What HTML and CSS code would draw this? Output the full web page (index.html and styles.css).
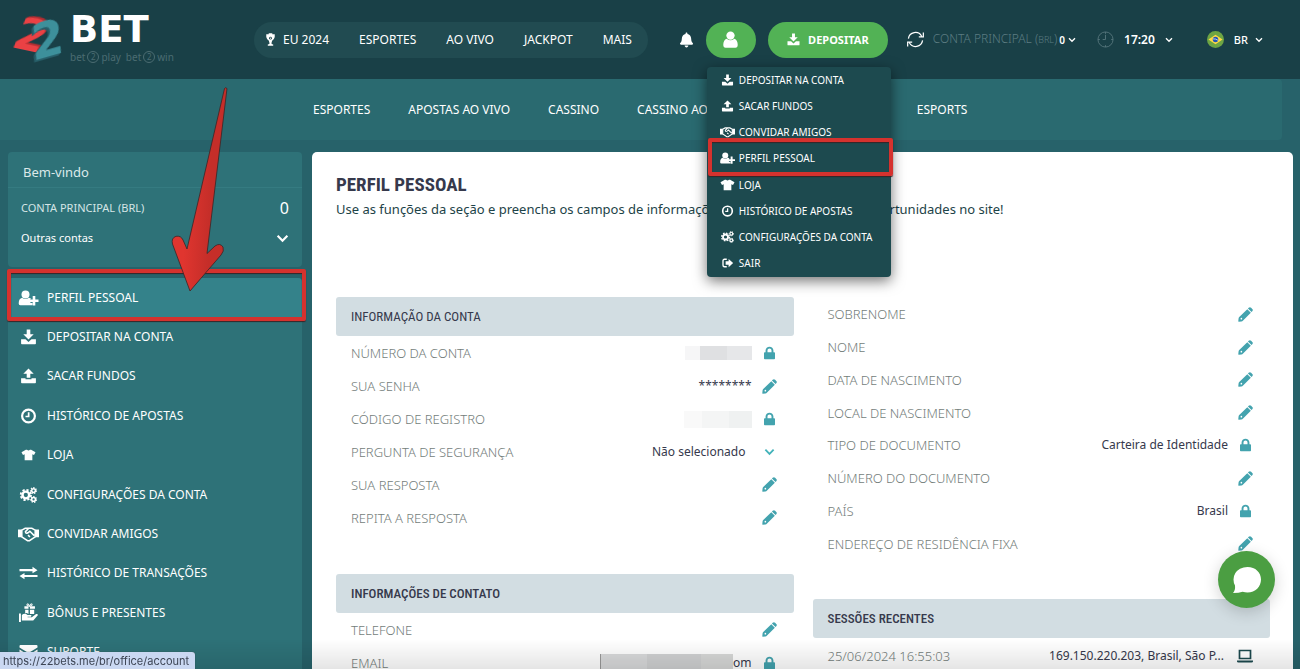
FILE: index.html
```html
<!DOCTYPE html>
<html lang="pt-BR">
<head>
<meta charset="utf-8">
<title>22BET - Perfil pessoal</title>
<link rel="stylesheet" href="styles.css">
</head>
<body>
<svg class="sprite" aria-hidden="true">
  <symbol id="download" viewBox="0 0 16 16"><path d="M6.200.6h3.600v4.600h3.400L8 10.400 2.800 5.200h3.400z"/><path d="M.6 10.200h4.400L8 13l3-2.800h4.400v4.200q0 .8-.8.8H1.400q-.8 0-.8-.8z"/></symbol>
  <symbol id="upload" viewBox="0 0 16 16"><path d="M6.200 9.800V5.800H2.800L8 .6l5.200 5.200H9.800v4z"/><path d="M.6 10.200h4.400v1h6v-1h4.400v4.200q0 .8-.8.8H1.400q-.8 0-.8-.8z"/></symbol>
  <symbol id="user" viewBox="0 0 16 16"><circle cx="8" cy="4.300" r="3.900"/><path d="M4.400 7.200Q8 10.300 11.600 7.200 14.800 8.300 14.800 13 14.800 15.800 12.600 15.800H3.400Q1.200 15.800 1.200 13 1.200 8.300 4.400 7.200z"/></symbol>
  <symbol id="userplus" viewBox="0 0 20 16"><circle cx="7" cy="4.500" r="4"/><path d="M3.600 7.700q3.400 2.500 6.800 0 1.600.3 2.400 1.300h-.9v4h2.200v2q-.3.300-1 .3H1.800Q.2 15.300.2 13.500q0-5 3.400-5.800z"/><path d="M14.200 6h2.600v3.500H20v2.500h-3.200v3.500h-2.600V12H11V9.500h3.200z"/></symbol>
  <symbol id="clock" viewBox="0 0 16 16"><circle cx="8" cy="8" r="6.400" fill="none" stroke="currentColor" stroke-width="2.200"/><path d="M7.300 4.200h1.700v5H5V7.700h2.300z"/></symbol>
  <symbol id="shirt" viewBox="0 0 16 16"><path d="M5 2h1.300q1.700 1.800 3.400 0H11l5 2.800-1.700 3.200-1.900-.9V14H3.600V7.100L1.700 8 0 4.800z"/></symbol>
  <symbol id="gears" viewBox="0 0 20 18"><g fill="none" stroke="currentColor"><circle cx="7" cy="9" r="3.800" stroke-width="2.800"/><circle cx="7" cy="9" r="5.800" stroke-width="2" stroke-dasharray="2.500 2.055"/><circle cx="15.700" cy="4" r="2.100" stroke-width="1.700"/><circle cx="15.700" cy="4" r="3.300" stroke-width="1.300" stroke-dasharray="1.500 1.460"/><circle cx="15.700" cy="14" r="2.100" stroke-width="1.700"/><circle cx="15.700" cy="14" r="3.300" stroke-width="1.300" stroke-dasharray="1.500 1.460"/></g></symbol>
  <symbol id="hands" viewBox="0 0 22 16"><path d="M0 3.200h4v8.300H0zM18 3.200h4v8.300h-4z"/><path d="M4 4l3.500-2h7L18 4v7l-6 4h-2l-6-4zM11 2.200L7.800 5.500q0 2.500 2.600 1.200l2-1.500 4.600 4.500M10.500 9.200l2 2" fill="none" stroke="currentColor" stroke-width="1.600"/></symbol>
  <symbol id="exchange" viewBox="0 0 18 14"><path d="M0 3h13V.8L18 4.200 13 7.300V5.200H0zM18 9H5V6.900L0 10l5 3.300v-2.200h13z"/></symbol>
  <symbol id="gift" viewBox="0 0 20 20"><path d="M0 11h2v9H0zM3 12.500q3-2.200 6 0h3.500q1.500.8 0 2H9v.6h4.500L18 11.500q1.700-.3 2 1.200L15 18.500H3zM6.500 7H10v4.500Q7.500 9.700 6.500 11zM11.500 7H16v4.500h-4.500zM5.700 3.500H10V6H5.700zM11.500 3.500h5.300V6h-5.300z"/><path d="M11 3.500Q7 3 8.500 1 10-.2 11 3.500 12.200-.2 13.800 1 15 3 11 3.500" fill="none" stroke="currentColor"/></symbol>
  <symbol id="mail" viewBox="0 0 18 14"><path d="M1 0h16q1 0 1 1v1.500L9 8 0 2.500V1q0-1 1-1zM0 4.500L9 10l9-5.500V13q0 1-1 1H1q-1 0-1-1z"/></symbol>
  <symbol id="exit" viewBox="0 0 16 16"><path d="M7 3H4Q2 3 2 5v6q0 2 2 2h3" fill="none" stroke="currentColor" stroke-width="1.800"/><path d="M5.500 5.800h4V2.500L15.500 8l-6 5.500v-3.300h-4z"/></symbol>
  <symbol id="bell" viewBox="0 0 448 512"><path d="M224 512c35.320 0 63.970-28.650 63.970-64H160.030c0 35.350 28.650 64 63.970 64zm215.390-149.710c-19.320-20.760-55.470-51.990-55.470-154.290 0-77.700-54.480-139.900-127.940-155.160V32c0-17.670-14.320-32-31.980-32s-31.980 14.330-31.980 32v20.840C118.560 68.100 64.080 130.300 64.080 208c0 102.300-36.150 133.530-55.470 154.290-6 6.450-8.660 14.160-8.610 21.710.11 16.400 12.980 32 32.100 32h383.800c19.120 0 32-15.600 32.100-32 .05-7.550-2.610-15.270-8.610-21.710z"/></symbol>
  <symbol id="lock" viewBox="0 0 448 512"><path d="M416 224h-32v-72C384 68.200 307.800 0 224 0S64 68.200 64 152v72H32c-18 0-32 14-32 32v224c0 18 14 32 32 32h384c18 0 32-14 32-32V256c0-18-14-32-32-32zm-110 0H142v-72c0-44 38-78 82-78s82 34 82 78v72z"/></symbol>
  <symbol id="pencil" viewBox="0 0 16 16"><path d="M10.600 1.600l.8-.8q1.300-1.300 2.600 0l1.200 1.200q1.300 1.300 0 2.600l-.8.800zM9.900 2.300l3.800 3.800-8.300 8.300q-.8.900-1.800 1l-2.800.3q-.6 0-.5-.6l.3-2.800q.1-1 1-1.800z"/><circle cx="3.600" cy="12.400" r=".9" fill="#fff"/></symbol>
  <symbol id="chevron" viewBox="0 0 12 8"><path d="M1.500 1.500L6 6l4.500-4.500" fill="none" stroke="currentColor" stroke-width="2"/></symbol>
  <symbol id="reload" viewBox="0 0 18 18"><g fill="none" stroke="currentColor" stroke-width="1.300"><path d="M1.500 8A7.500 7.500 0 0 1 15.500 5.500M17.300 1.500v4.800h-4.800M16.500 10A7.500 7.500 0 0 1 2.500 12.500M.7 16.500v-4.800h4.800"/></g></symbol>
  <symbol id="cup" viewBox="0 0 10 14"><path d="M3 0h4v1.200h2.700v3Q9 7.500 6.800 8.500L6.200 10.500V12l1.800.6V14H2v-1.400l1.800-.6v-1.500l-.6-2Q1 7.500.3 4.200v-3H3z"/><circle cx="5" cy="5.500" r="1.500" fill="#194047"/><circle cx="5" cy="5.500" r=".7"/></symbol>
  <symbol id="laptop" viewBox="0 0 16 14"><path d="M2.500 1.500h11v8h-11z" fill="none" stroke="currentColor" stroke-width="1.700"/><path d="M0 11.500h16v1q0 1-1.500 1h-13Q0 13.500 0 12.500z"/></symbol>
</svg>

<div class="page">
  <header class="topbar">
    <a class="logo" href="#" aria-label="22BET">
      <svg class="mark" viewBox="0 0 50 48">
        <text class="two red" x="1" y="34" transform="rotate(12 12 24)">2</text>
        <text class="two teal" x="18" y="40" transform="rotate(-16 34 27)">2</text>
      </svg>
      <span class="brand"><b>BET</b><small>bet<i>2</i>play&ensp;bet<i>2</i>win</small></span>
    </a>
    <nav class="pill" aria-label="Principal">
      <a href="#"><svg class="i-cup"><use href="#cup"/></svg>EU 2024</a><a href="#">ESPORTES</a><a href="#">AO VIVO</a><a href="#">JACKPOT</a><a href="#">MAIS</a>
    </nav>
    <button class="bell" aria-label="Notificações"><svg><use href="#bell"/></svg></button>
    <div class="account">
      <button class="green user" aria-label="Conta"><svg><use href="#user"/></svg></button>
      <ul class="dropdown">
        <li><a href="#"><svg><use href="#download"/></svg>DEPOSITAR NA CONTA</a></li>
        <li><a href="#"><svg><use href="#upload"/></svg>SACAR FUNDOS</a></li>
        <li><a href="#"><svg><use href="#hands"/></svg>CONVIDAR AMIGOS</a></li>
        <li class="marked"><a href="#"><svg><use href="#userplus"/></svg>PERFIL PESSOAL</a></li>
        <li><a href="#"><svg class="large"><use href="#shirt"/></svg>LOJA</a></li>
        <li><a href="#"><svg><use href="#clock"/></svg>HISTÓRICO DE APOSTAS</a></li>
        <li><a href="#"><svg><use href="#gears"/></svg>CONFIGURAÇÕES DA CONTA</a></li>
        <li><a href="#"><svg><use href="#exit"/></svg>SAIR</a></li>
      </ul>
    </div>
    <button class="green deposit"><svg><use href="#download"/></svg>DEPOSITAR</button>
    <button class="balance"><svg class="i-reload"><use href="#reload"/></svg><span>CONTA PRINCIPAL (<small>BRL</small>)</span><b>0</b><svg class="i-chev"><use href="#chevron"/></svg></button>
    <button class="time"><svg class="i-clock" viewBox="0 0 18 18"><circle cx="9" cy="9" r="8"/><path d="M9 4v5H6M9 1v2M9 15v2M1 9h2M15 9h2"/></svg>17:20<svg class="i-chev"><use href="#chevron"/></svg></button>
    <button class="lang"><svg class="i-flag" viewBox="0 0 18 18"><circle cx="9" cy="9" r="9" fill="#6da544"/><path d="M9 4L16.500 9 9 14 1.500 9z" fill="#ffda44"/><circle cx="9" cy="9" r="2.900" fill="#2257b5"/><path d="M6.300 8.400q3-.4 5.300 1.400" stroke="#eee" stroke-width=".8" fill="none"/></svg>BR<svg class="i-chev"><use href="#chevron"/></svg></button>
  </header>

  <nav class="subnav" aria-label="Seções">
    <a href="#">ESPORTES</a><a href="#">APOSTAS AO VIVO</a><a href="#">CASSINO</a><a href="#">CASSINO AO VIVO</a><a class="far" href="#">ESPORTS</a>
  </nav>

  <div class="columns">
    <aside class="side">
      <section class="wallet">
        <p class="hello">Bem-vindo</p>
        <div class="main-acc"><span>CONTA PRINCIPAL (BRL)</span><b>0</b></div>
        <button class="others">Outras contas<svg><use href="#chevron"/></svg></button>
      </section>
      <ul class="menu">
        <li class="marked"><a href="#"><svg><use href="#userplus"/></svg>PERFIL PESSOAL</a></li>
        <li><a href="#"><svg><use href="#download"/></svg>DEPOSITAR NA CONTA</a></li>
        <li><a href="#"><svg><use href="#upload"/></svg>SACAR FUNDOS</a></li>
        <li><a href="#"><svg><use href="#clock"/></svg>HISTÓRICO DE APOSTAS</a></li>
        <li><a href="#"><svg class="small"><use href="#shirt"/></svg>LOJA</a></li>
        <li><a href="#"><svg><use href="#gears"/></svg>CONFIGURAÇÕES DA CONTA</a></li>
        <li><a href="#"><svg><use href="#hands"/></svg>CONVIDAR AMIGOS</a></li>
        <li><a href="#"><svg class="small"><use href="#exchange"/></svg>HISTÓRICO DE TRANSAÇÕES</a></li>
        <li><a href="#"><svg class="big"><use href="#gift"/></svg>BÔNUS E PRESENTES</a></li>
        <li><a href="#"><svg class="small"><use href="#mail"/></svg>SUPORTE</a></li>
      </ul>
    </aside>

    <main class="content">
      <h1>PERFIL PESSOAL</h1>
      <p class="lead">Use as funções da seção e preencha os campos de informações para ter acesso a mais oportunidades no site!</p>
      <div class="cols">
        <div class="col">
          <h2 class="regular">INFORMAÇÃO DA CONTA</h2>
          <div class="fields six">
            <div class="field"><span>NÚMERO DA CONTA</span><em class="mask m1"></em><svg class="lk"><use href="#lock"/></svg></div>
            <div class="field"><span>SUA SENHA</span><em>********</em><button aria-label="Editar senha"><svg><use href="#pencil"/></svg></button></div>
            <div class="field"><span>CÓDIGO DE REGISTRO</span><em class="mask m2"></em><svg class="lk"><use href="#lock"/></svg></div>
            <div class="field"><label for="q">PERGUNTA DE SEGURANÇA</label><select id="q"><option>Não selecionado</option></select><svg class="ch"><use href="#chevron"/></svg></div>
            <div class="field"><span>SUA RESPOSTA</span><button aria-label="Editar resposta"><svg><use href="#pencil"/></svg></button></div>
            <div class="field"><span>REPITA A RESPOSTA</span><button aria-label="Editar repetição"><svg><use href="#pencil"/></svg></button></div>
          </div>
          <h2>INFORMAÇÕES DE CONTATO</h2>
          <div class="fields two-rows">
            <div class="field"><span>TELEFONE</span><button aria-label="Editar telefone"><svg><use href="#pencil"/></svg></button></div>
            <div class="field"><span>EMAIL</span><em><i class="mask m3"></i>om</em><svg class="lk"><use href="#lock"/></svg></div>
          </div>
        </div>
        <div class="col right">
          <div class="fields eight">
            <div class="field"><span>SOBRENOME</span><button aria-label="Editar sobrenome"><svg><use href="#pencil"/></svg></button></div>
            <div class="field"><span>NOME</span><button aria-label="Editar nome"><svg><use href="#pencil"/></svg></button></div>
            <div class="field"><span>DATA DE NASCIMENTO</span><button aria-label="Editar data"><svg><use href="#pencil"/></svg></button></div>
            <div class="field"><span>LOCAL DE NASCIMENTO</span><button aria-label="Editar local"><svg><use href="#pencil"/></svg></button></div>
            <div class="field"><span>TIPO DE DOCUMENTO</span><em>Carteira de Identidade</em><svg class="lk"><use href="#lock"/></svg></div>
            <div class="field"><span>NÚMERO DO DOCUMENTO</span><button aria-label="Editar número"><svg><use href="#pencil"/></svg></button></div>
            <div class="field"><span>PAÍS</span><em>Brasil</em><svg class="lk"><use href="#lock"/></svg></div>
            <div class="field"><span>ENDEREÇO DE RESIDÊNCIA FIXA</span><button aria-label="Editar endereço"><svg><use href="#pencil"/></svg></button></div>
          </div>
          <h2>SESSÕES RECENTES</h2>
          <div class="fields one">
            <div class="field session"><span>25/06/2024 16:55:03</span><em>169.150.220.203, Brasil, São P...</em><svg class="lap"><use href="#laptop"/></svg></div>
          </div>
        </div>
      </div>
    </main>
  </div>
</div>

<div class="fade"></div>
<svg class="arrow" viewBox="0 0 60 210" aria-hidden="true">
  <defs><linearGradient id="ag" x1="0" x2="1" y1="0" y2=".12"><stop offset=".3" stop-color="#e0352f"/><stop offset=".75" stop-color="#c52e29"/></linearGradient></defs>
  <path d="M54.500 4.500Q55.500 3 57 4.500L37 169.500 45 162Q50 158.500 53 163 54.500 167 51 171L20 207 2.500 160Q1 154 6 152.300 11 151.500 13 156L17 165z" fill="url(#ag)" stroke="#3a2426" stroke-width=".8"/>
</svg>
<button class="chat" aria-label="Chat"><svg viewBox="0 0 30 28"><path d="M15.500 1C23.500 1 29 6.500 29 13.500S23.500 26.500 15.500 26.500q-2.500 0-4.800-.8Q7 27 1 27 3.500 24 3 19.500 1.500 17 1.500 13.500 1.500 6.500 8 2.700 11.500 1 15.500 1z" fill="#fff"/></svg></button>
<div class="status">https://22bets.me/br/office/account</div>
</body>
</html>
```

FILE: styles.css
```css
* { box-sizing: border-box; }

body {
  margin: 0;
  background: #27626a;
  color: #fff;
  font: 12px/16px "Noto Sans", "Open Sans", sans-serif;
}

a { color: inherit; text-decoration: none; }
button, select { font: inherit; color: inherit; background: none; border: 0; padding: 0; }
ul { list-style: none; margin: 0; padding: 0; }
h1, h2, p { margin: 0; }
i, em { font-style: normal; }
svg { display: block; flex: none; fill: currentColor; }
.sprite { position: absolute; width: 0; height: 0; }
.page { height: 100vh; overflow: hidden; }

/* Top bar */
.topbar {
  display: flex;
  align-items: center;
  height: 79px;
  padding: 0 37px 0 14px;
  background: #194047;
}
.logo { display: flex; gap: 6px; width: 240px; }
.mark { width: 50px; height: 48px; overflow: visible; }
.two { font: italic bold 44px "DejaVu Sans", sans-serif; }
.red { fill: #ea4144; filter: drop-shadow(1px -1px 0 #b03034) drop-shadow(1px -1px 0 #a92c30); }
.teal { fill: #3d909b; font-size: 48px; filter: drop-shadow(-1px 1px 0 #2a6570) drop-shadow(-2px 1px 0 #255b65); }
.brand { display: flex; flex-direction: column; }
.brand b { font: bold 37px/28px "DejaVu Sans", sans-serif; }
.brand small { display: flex; align-items: center; margin-top: 7px; font-size: 10px; line-height: 12px; color: #4b6c72; }
.brand i { width: 12px; height: 12px; margin: 0 2px; border: 1px solid; border-radius: 50%; font-size: 8px; line-height: 10px; text-align: center; }
.pill { display: flex; gap: 30px; align-items: center; height: 36px; padding: 0 16px 0 12px; border-radius: 18px; background: #214b51; }
.pill a { display: flex; gap: 8px; }
.i-cup { width: 9px; height: 15px; }
.bell { margin-left: 32px; }
.bell svg { width: 13px; height: 16px; }
.account { position: relative; z-index: 5; margin: 0 12px 0 13px; }
.green { display: flex; align-items: center; justify-content: center; height: 36px; border-radius: 18px; background: #52b255; }
.user { width: 50px; }
.user svg { width: 17px; height: 17px; }
.deposit { width: 120px; gap: 8px; font-weight: bold; font-size: 11px; }
.deposit svg { width: 13px; height: 13px; }
.i-chev { width: 8px; height: 6px; }
.balance { display: flex; align-items: center; margin-left: auto; color: #5c7c82; font-size: 12px; font-weight: 300; }
.balance small { font-size: 9px; }
.balance b { margin: 0 3px 0 2px; color: #fff; font-weight: 600; font-size: 10px; }
.balance .i-chev, .i-reload { color: #fff; }
.i-reload { width: 17px; height: 17px; margin-right: 9px; }
.time { display: flex; align-items: center; gap: 10px; margin-left: 21px; font-size: 12px; font-weight: 600; }
.i-clock { width: 17px; height: 17px; fill: none; stroke: #54747a; }
.lang { display: flex; align-items: center; gap: 7px; margin-left: 34px; font-size: 11px; font-weight: 500; }
.i-flag { width: 17px; height: 17px; margin-right: 3px; }

.dropdown {
  position: absolute;
  top: 45px;
  left: 1px;
  display: grid;
  grid-template-rows: repeat(8, 1fr);
  width: 184px;
  height: 210px;
  border-radius: 4px;
  background: #1d4a4f;
  box-shadow: 0 4px 14px rgba(0, 0, 0, .55);
  font-size: 10px;
}
.dropdown a { display: flex; align-items: center; height: 100%; gap: 4px; padding-left: 13px; }
.dropdown svg { width: 15px; height: 12px; }
.dropdown .large { height: 14px; }
.marked { position: relative; }
.marked::after {
  content: "";
  position: absolute;
  border: 4px solid #d5322e;
  border-radius: 2px;
  box-shadow: 0 1px 1px #3a2426, inset 0 1px 1px #3a2426;
  pointer-events: none;
}
.dropdown .marked::after { inset: -7px -2px -4px 1px; }

/* Section links */
.subnav {
  display: flex;
  align-items: center;
  gap: 38px;
  height: 61px;
  margin-right: 18px;
  padding-left: 313px;
  border-radius: 0 4px 4px 0;
  background: #2a6a70;
}
.far { margin-left: 140px; }

.columns { display: flex; gap: 10px; padding: 12px 7px 0 8px; }

/* Sidebar */
.side { width: 294px; flex: none; }
.wallet { height: 115px; border-radius: 4px; background: #2e7278; }
.hello { height: 36px; padding: 12px 15px 0; border-bottom: 1px solid #357b81; font-size: 13px; color: #dce9ea; }
.main-acc { display: flex; align-items: center; justify-content: space-between; height: 40px; padding: 0 13px; font-size: 11px; color: #d5e5e6; }
.main-acc b { font-size: 16px; font-weight: 400; color: #fff; }
.others { display: flex; align-items: center; justify-content: space-between; width: 100%; height: 20px; padding: 0 13px; font-size: 11px; }
.others svg { width: 13px; height: 9px; }
.menu { display: grid; grid-template-rows: repeat(10, 1fr); height: 394px; margin-top: 11px; border-radius: 4px; background: #2e7278; }
.menu a { display: flex; align-items: center; height: 100%; gap: 8px; padding-left: 10px; }
.menu svg { width: 21px; height: 16px; }
.menu .small { height: 14px; }
.menu .big { height: 19px; }
.menu .marked a { background: #34828a; border-radius: 4px 4px 0 0; }
.menu .marked::after { inset: -9px -4px -4px -1px; }

/* Profile */
.content { flex: 1; min-width: 0; padding: 23px 23px 0 24px; border-radius: 5px; background: #fff; min-height: 600px; color: #36394c; }
h1 { font: bold 19px/20px "Roboto Condensed", Roboto, sans-serif; }
.lead { margin-top: 6px; color: #1d4348; font-size: 13px; }
.cols { display: grid; grid-template-columns: 1fr 1fr; gap: 19px; margin-top: 80px; }
h2 { height: 39px; padding: 0 15px; border-radius: 3px; background: #d2dde2; font: 500 13px/39px "Roboto Condensed", Roboto, sans-serif; }
.regular { font-weight: 400; }
.fields { display: grid; grid-auto-rows: 1fr; padding: 0 17px 0 15px; }
.six { height: 197px; margin: 1px 0 40px; }
.two-rows { height: 66px; }
.eight { height: 262px; margin: 1px 0 39px; }
.one { height: 34px; margin-top: 1px; }
.field { display: flex; align-items: center; }
.field > span, .field > label { flex: 1; font-size: 13px; font-weight: 300; color: #737d7a; }
.field > em { display: flex; align-items: center; }
.field > button { margin-left: 10px; }
.field > button svg { width: 15px; height: 15px; color: #43a3ae; }
.lk { width: 11px; height: 14px; margin: 0 2px 0 12px; color: #43a3ae; }
.ch { width: 11px; height: 8px; margin: 0 2px 0 18px; color: #43b3ba; }
.lap { width: 16px; height: 14px; margin-left: 13px; color: #1d4a4f; }
select { appearance: none; text-align: right; }
.mask { height: 14px; background: linear-gradient(90deg, #f6f6f7 22%, #dfe0e2 22% 62%, #e6e7e9 62%); }
.m1 { width: 67px; }
.m2 { width: 68px; height: 17px; background: linear-gradient(90deg, #f9f9f9 26%, #f4f5f5 26% 66%, #eff1f1 66%); }
.m3 { width: 133px; height: 18px; border-left: 1px solid #999; background: linear-gradient(90deg, #d9dadb 35%, #d0d1d2 35% 76%, #d7d8d7 76%); }

/* Overlays */
.fade { position: fixed; inset: auto 0 0 0; height: 30px; background: linear-gradient(transparent, rgba(0, 0, 0, .1)); pointer-events: none; }
.arrow { position: absolute; top: 84px; left: 170px; z-index: 6; width: 60px; height: 210px; pointer-events: none; }
.chat { position: fixed; right: 25px; bottom: 61px; display: grid; place-items: center; width: 57px; height: 57px; border-radius: 50%; background: #4b9e42; box-shadow: 0 4px 16px rgba(0, 0, 0, .18); }
.chat svg { width: 30px; height: 28px; }
.status { position: fixed; left: 0; bottom: 0; height: 17px; padding: 0 6px 0 3px; border-radius: 0 3px 0 0; background: #cad8f2; color: #3c4454; font: 11px/18px Inter, Roboto, sans-serif; box-shadow: 0 0 1px #333; }
```
